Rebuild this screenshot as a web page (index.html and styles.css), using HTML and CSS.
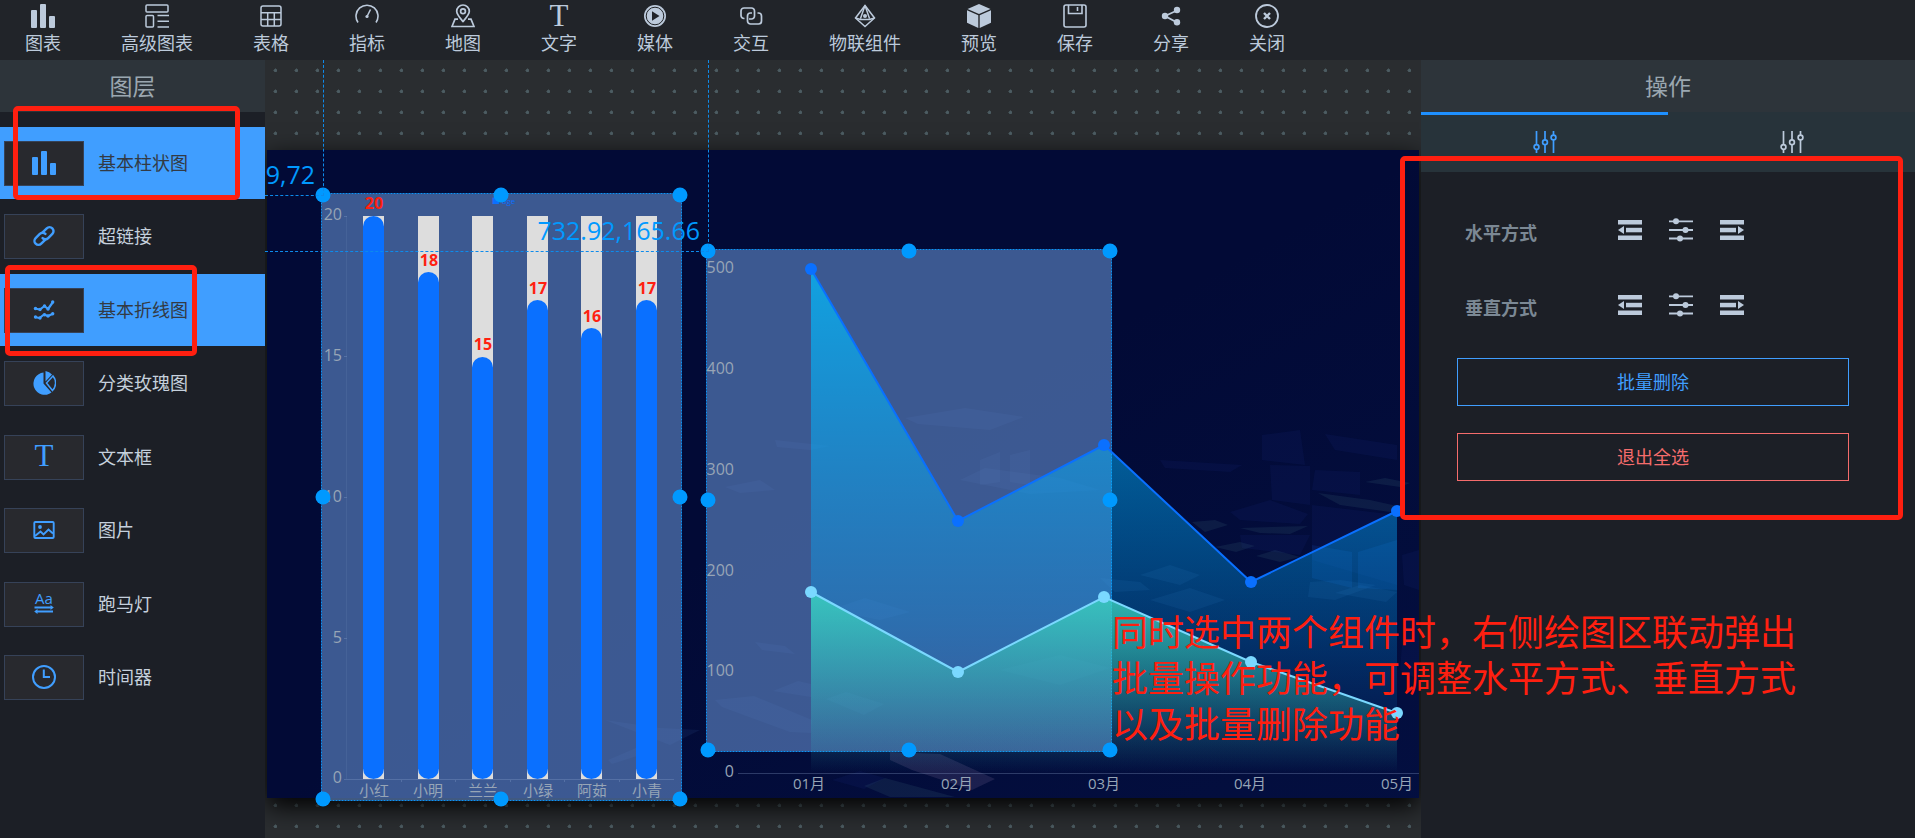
FILE: index.html
```html
<!DOCTYPE html>
<html lang="zh-CN">
<head>
<meta charset="utf-8">
<title>图层</title>
<link rel="stylesheet" href="styles.css">
</head>
<body>
<svg class="defs" aria-hidden="true">
  <symbol id="i-bars" viewBox="0 0 24 24"><g fill="currentColor"><rect y="6" width="6" height="18" rx="1"/><rect x="9" width="6" height="24" rx="1"/><rect x="18" y="12" width="6" height="12" rx="1"/></g></symbol>
  <symbol id="i-adv" viewBox="0 0 24 24"><g fill="none" stroke="currentColor" stroke-width="1.5"><rect x="1" y="1" width="22" height="7" rx="1"/><rect x="1" y="11.5" width="7.5" height="11.5" rx="1"/><path d="M12.5 11.5H24M12.5 17.2H24M12.5 23H24"/></g></symbol>
  <symbol id="i-table" viewBox="0 0 24 24"><g fill="none" stroke="currentColor" stroke-width="1.5"><rect x="2" y="2" width="20" height="20" rx="2"/><path d="M2 8.8H22M2 15.4H22M8.7 8.8V22M15.3 8.8V22"/></g></symbol>
  <symbol id="i-gauge" viewBox="0 0 24 24"><g fill="none" stroke="currentColor" stroke-width="1.6"><path d="M3 18.5A11 11 0 1 1 21 18.5"/><path d="M12 12.5L15.5 5.5"/></g><circle cx="12" cy="12.5" r="1.6" fill="currentColor"/></symbol>
  <symbol id="i-map" viewBox="0 0 24 24"><g fill="none" stroke="currentColor" stroke-width="1.7"><path d="M12 17.5C8.5 13.500 5.700 10.500 5.700 7.300A6.300 6.300 0 0 1 18.300 7.300C18.300 10.500 15.500 13.500 12 17.500Z"/><circle cx="12" cy="7.300" r="2.400"/><path d="M7 15.200H4L1 22.500H23L20 15.200H17"/></g></symbol>
  <symbol id="i-play" viewBox="0 0 24 24"><circle cx="12" cy="12" r="11" fill="currentColor"/><circle cx="12" cy="12" r="8.800" fill="none" stroke="#212429" stroke-width="1"/><path d="M9 7.300L16.500 12L9 16.700Z" fill="#212429"/></symbol>
  <symbol id="i-inter" viewBox="0 0 24 24"><g fill="none" stroke="currentColor" stroke-width="1.700"><path d="M5.500 14.500H5A3 3 0 0 1 2 11.500V7A3 3 0 0 1 5 4H12.500A3 3 0 0 1 15.500 7V12A3 3 0 0 1 12.500 15H10"/><path d="M18.500 9H19.500A3 3 0 0 1 22.500 12V17A3 3 0 0 1 19.500 20H11.500A3 3 0 0 1 8.500 17V12A3 3 0 0 1 11.500 9H13"/></g></symbol>
  <symbol id="i-iot" viewBox="0 0 24 24"><g fill="none" stroke="currentColor" stroke-width="1.500"><path d="M12 1.500L21.500 14L12 22.500L2.500 14Z"/><path d="M12 1.500L7.500 14.500M12 1.500L16.500 14.500M2.500 14L7.500 15.500H16.500L21.500 14"/></g><circle cx="12" cy="12" r="2" fill="currentColor"/></symbol>
  <symbol id="i-cube" viewBox="0 0 24 24"><g fill="currentColor"><path d="M12 0L23.500 5L12 10L.500 5Z"/><path d="M0 6.300L11.300 11.300V24L0 18.800Z"/><path d="M24 6.300L12.700 11.300V24L24 18.800Z"/></g></symbol>
  <symbol id="i-save" viewBox="0 0 24 24"><g fill="none" stroke="currentColor" stroke-width="1.600"><rect x="1" y="1" width="22" height="22" rx="2"/><path d="M5.500 1V9.500H19V1M14.500 3V7"/></g></symbol>
  <symbol id="i-share" viewBox="0 0 24 24"><path d="M18 6.500L6 12L18 18.500" fill="none" stroke="currentColor" stroke-width="1.800"/><g fill="currentColor"><circle cx="18" cy="6" r="3.200"/><circle cx="6" cy="12" r="3.200"/><circle cx="18" cy="18.200" r="3.200"/></g></symbol>
  <symbol id="i-close" viewBox="0 0 24 24"><circle cx="12" cy="12" r="11" fill="none" stroke="currentColor" stroke-width="1.800"/><path d="M9 9L15 15M15 9L9 15" stroke="currentColor" stroke-width="2.400"/></symbol>
  <symbol id="i-chain" viewBox="2 2 20 20"><g fill="none" stroke="currentColor" stroke-width="2.200" stroke-linecap="round"><path d="M10.500 9L14.500 5A3.600 3.600 0 0 1 19.600 10.100L15.800 13.900A3.600 3.600 0 0 1 10.700 13.900"/><path d="M13.500 15L9.500 19A3.600 3.600 0 0 1 4.400 13.900L8.200 10.100A3.600 3.600 0 0 1 13.300 10.100"/></g></symbol>
  <symbol id="i-line" viewBox="0 0 24 24"><g fill="none" stroke="currentColor" stroke-width="2.200" stroke-linejoin="round"><path d="M2.500 10.500L8 11.500L12.500 8L16 11L21 4"/><path d="M2.500 19L7.500 20L12 16.500L16 18L21.500 15.500"/></g><g fill="currentColor"><circle cx="3.500" cy="10.500" r="1.700"/><circle cx="8" cy="11.500" r="1.700"/><circle cx="12.500" cy="8" r="1.700"/><circle cx="16" cy="11" r="1.700"/><circle cx="20.700" cy="4" r="1.700"/><circle cx="3.500" cy="19" r="1.700"/><circle cx="8" cy="20" r="1.700"/><circle cx="12.500" cy="16.700" r="1.700"/><circle cx="16" cy="18" r="1.700"/><circle cx="20.700" cy="15.700" r="1.700"/></g></symbol>
  <symbol id="i-pie" viewBox="0 0 24 24"><path d="M11.500 1.500V12.500L19.500 21.500A11.200 11.200 0 1 1 11.500 1.500Z" fill="currentColor"/><path d="M13.500 0V10.500L20 3.500A10.500 10.500 0 0 0 13.500 0Z" fill="currentColor"/><path d="M21 5L14.500 12L20.500 19.500A10.800 10.800 0 0 0 21 5Z" fill="none" stroke="currentColor" stroke-width="1.500"/></symbol>
  <symbol id="i-image" viewBox="0 0 24 24"><g fill="none" stroke="currentColor" stroke-width="1.900"><rect x="2.300" y="4" width="19.400" height="16" rx="1"/><path d="M3 18L8.500 13.500L11.500 16.500L16.500 11.500L21 15.500"/></g><circle cx="8" cy="9" r="1.900" fill="currentColor"/></symbol>
  <symbol id="i-clock" viewBox="0 0 24 24"><g fill="none" stroke="currentColor" stroke-width="2"><circle cx="12" cy="12" r="11"/><path d="M11.800 4.500V12H18"/></g></symbol>
  <symbol id="i-sliders" viewBox="0 0 24 24"><g fill="none" stroke="currentColor" stroke-width="1.700"><path d="M3.500 1V15M3.500 19.500V23M12 1V10M12 14.500V23M20.500 1V5.500M20.500 10V23"/><circle cx="3.500" cy="17" r="2.400"/><circle cx="12" cy="12.200" r="2.400"/><circle cx="20.500" cy="7.500" r="2.400"/></g></symbol>
  <symbol id="i-left" viewBox="0 0 24 24"><g fill="currentColor"><rect y="2" width="24" height="4.500"/><rect x="8" y="9.800" width="16" height="4.500"/><rect y="17.500" width="24" height="4.500"/><path d="M0 12L6 8V16Z"/></g></symbol>
  <symbol id="i-right" viewBox="0 0 24 24"><g fill="currentColor"><rect y="2" width="24" height="4.500"/><rect y="9.800" width="16" height="4.500"/><rect y="17.500" width="24" height="4.500"/><path d="M24 12L18 8V16Z"/></g></symbol>
  <symbol id="i-mid" viewBox="0 0 24 24"><path d="M0 3.300H24M0 12H24M0 20.500H24" stroke="currentColor" stroke-width="1.800"/><g fill="currentColor"><circle cx="7" cy="3.300" r="3"/><circle cx="16.500" cy="12" r="3"/><circle cx="11" cy="20.500" r="3"/></g></symbol>
</svg>

<div class="app">
  <nav class="toolbar">
    <button class="tool"><svg class="icon"><use href="#i-bars"/></svg><span>图表</span></button>
    <button class="tool"><svg class="icon"><use href="#i-adv"/></svg><span>高级图表</span></button>
    <button class="tool"><svg class="icon"><use href="#i-table"/></svg><span>表格</span></button>
    <button class="tool"><svg class="icon"><use href="#i-gauge"/></svg><span>指标</span></button>
    <button class="tool"><svg class="icon"><use href="#i-map"/></svg><span>地图</span></button>
    <button class="tool"><svg class="icon" viewBox="0 0 24 24"><text x="12" y="22" class="glyph-serif">T</text></svg><span>文字</span></button>
    <button class="tool"><svg class="icon"><use href="#i-play"/></svg><span>媒体</span></button>
    <button class="tool"><svg class="icon"><use href="#i-inter"/></svg><span>交互</span></button>
    <button class="tool"><svg class="icon"><use href="#i-iot"/></svg><span>物联组件</span></button>
    <button class="tool"><svg class="icon"><use href="#i-cube"/></svg><span>预览</span></button>
    <button class="tool"><svg class="icon"><use href="#i-save"/></svg><span>保存</span></button>
    <button class="tool"><svg class="icon"><use href="#i-share"/></svg><span>分享</span></button>
    <button class="tool"><svg class="icon"><use href="#i-close"/></svg><span>关闭</span></button>
  </nav>

  <div class="workspace">
    <aside class="layers">
      <h2 class="panel-title">图层</h2>
      <ul class="layer-list">
        <li class="layer active"><span class="thumb"><svg class="icon"><use href="#i-bars"/></svg></span>基本柱状图</li>
        <li class="layer"><span class="thumb"><svg class="icon small"><use href="#i-chain"/></svg></span>超链接</li>
        <li class="layer active"><span class="thumb"><svg class="icon"><use href="#i-line"/></svg></span>基本折线图</li>
        <li class="layer"><span class="thumb"><svg class="icon"><use href="#i-pie"/></svg></span>分类玫瑰图</li>
        <li class="layer"><span class="thumb"><svg class="icon" viewBox="0 0 24 24"><text x="12" y="21" class="glyph-serif">T</text></svg></span>文本框</li>
        <li class="layer"><span class="thumb"><svg class="icon"><use href="#i-image"/></svg></span>图片</li>
        <li class="layer"><span class="thumb"><svg class="icon" viewBox="0 0 24 24"><text x="12" y="12" class="glyph-sans">Aa</text><path d="M2.500 15.500H19.500M4.500 19.500H21" stroke="currentColor" stroke-width="1.800"/><path d="M18.500 13L21.800 15.500L18.500 18ZM5.500 17L2.200 19.500L5.500 22Z" fill="currentColor"/></svg></span>跑马灯</li>
        <li class="layer"><span class="thumb"><svg class="icon"><use href="#i-clock"/></svg></span>时间器</li>
      </ul>
    </aside>

    <main class="canvas">
      <div class="screen">
        <svg class="city" viewBox="267 150 1152 648" preserveAspectRatio="xMidYMid slice" aria-hidden="true">
          <defs>
            <linearGradient id="glow" x1="0" y1="0" x2="1" y2="1"><stop offset=".5" stop-color="#0a2a78" stop-opacity="0"/><stop offset="1" stop-color="#0a2a78" stop-opacity=".15"/></linearGradient>
          </defs>
          <rect x="267" y="150" width="1152" height="648" fill="url(#glow)"/>
          <g fill="#3f6fb0" fill-opacity=".12">
            <path d="M905 418L965 408L1024 417L990 430L918 424Z"/><path d="M775 440L830 446L810 450L777 447Z"/>
            <path d="M725 487L760 480L775 490L740 493Z"/><path d="M960 480L985 468L1060 478L1100 490L1030 494Z"/>
            <path d="M980 460L1000 452V482L980 485ZM1010 455L1030 450V485L1010 482Z"/>
            <path d="M715 700L754 696L812 720L811 733L790 732L722 707Z"/>
            <path d="M773 691L798 681L811 684V697Z"/><path d="M826 699L846 692L884 704L864 715Z"/>
            <path d="M755 642L785 646L795 654L762 650Z"/><path d="M830 610L865 598L910 612L880 620Z"/>
            <path d="M605 720L660 728L700 730L670 745Z"/><path d="M608 760L650 742L640 755L612 764Z"/>
            <path d="M1000 670L1060 655L1110 668L1060 685Z"/><path d="M1340 580L1376 585L1335 600L1308 597L1310 582Z"/>
            <path d="M1335 593L1360 585L1397 592L1386 602Z"/><path d="M1140 575L1170 565L1200 575L1180 585Z"/>
            <path d="M1150 600L1190 588L1225 600L1190 612Z"/><path d="M1100 578L1140 582L1150 590L1115 592Z"/>
          </g>
          <g fill="#4d7f8f" fill-opacity=".14">
            <path d="M1192 522L1215 520L1228 525L1205 532Z"/><path d="M1240 528L1308 526L1290 534L1260 533Z"/>
            <path d="M1215 547L1240 542L1255 546L1236 552Z"/><path d="M1256 556L1275 550L1300 557L1280 562Z"/>
            <path d="M1318 493L1370 500L1397 506L1390 512L1340 505Z"/><path d="M1365 482L1385 478L1410 483L1400 487Z"/>
            <path d="M864 786L885 778L955 797H890Z"/>
          </g>
          <g fill="#2b3c9c" fill-opacity=".1">
            <path d="M1262 435L1300 430L1305 465L1262 460Z"/><path d="M1270 465L1310 466V505L1272 500Z"/>
            <path d="M1315 470L1360 472V495L1312 490Z"/><path d="M1312 505L1397 515V585L1312 560Z"/>
            <path d="M1240 535L1310 535L1300 555L1242 548Z"/><path d="M1325 434L1397 445V460L1335 450Z"/>
            <path d="M1160 460L1242 465L1230 472L1165 468Z"/><path d="M1230 512L1270 500L1308 514L1300 524L1240 520Z"/>
            <path d="M832 780L860 771L885 778L864 789Z"/>
            <path d="M1402 555L1419 550V590L1404 585ZM1404 620H1419V680L1400 670Z"/>
          </g>
          <path d="M890 752L940 754L995 779L972 790L912 770L890 760Z" fill="#80709a" fill-opacity=".2"/>
          <path d="M1312 545L1352 552V588L1312 578ZM1358 552L1397 540V590L1358 588Z" fill="#1658c8" fill-opacity=".16"/>
        </svg>
      </div>

      <div class="widget widget-bar">
        <svg viewBox="321 193 361 608" role="img" aria-label="基本柱状图">
          <rect class="sel" x="321.500" y="193.500" width="360" height="607"/>
          <text class="legend" x="492" y="204">■ age</text>
          <g class="axis"><path d="M344 779.500H674M344 216.500H347M344 356.500H347M344 497.500H347M344 638.500H347M401.500 780V782M455.500 780V782M510.500 780V782M564.500 780V782M619.500 780V782"/><path d="M346.500 216V779" stroke-opacity=".12"/></g>
          <g class="tick end"><text x="342" y="220">20</text><text x="342" y="361">15</text><text x="342" y="502">10</text><text x="342" y="643">5</text><text x="342" y="783">0</text></g>
          <g fill="#dddddd"><rect x="363" y="216" width="21" height="563"/><rect x="418" y="216" width="21" height="563"/><rect x="472" y="216" width="21" height="563"/><rect x="527" y="216" width="21" height="563"/><rect x="581" y="216" width="21" height="563"/><rect x="636" y="216" width="21" height="563"/></g>
          <g fill="#0a70ff"><rect x="363" y="216" width="21" height="563" rx="10.500"/><rect x="418" y="272" width="21" height="507" rx="10.500"/><rect x="472" y="357" width="21" height="422" rx="10.500"/><rect x="527" y="300" width="21" height="479" rx="10.500"/><rect x="581" y="328" width="21" height="451" rx="10.500"/><rect x="636" y="300" width="21" height="479" rx="10.500"/></g>
          <g class="value"><text x="374" y="209">20</text><text x="429" y="266">18</text><text x="483" y="350">15</text><text x="538" y="294">17</text><text x="592" y="322">16</text><text x="647" y="294">17</text></g>
          <g class="tick mid"><text x="374" y="796">小红</text><text x="428" y="796">小明</text><text x="483" y="796">兰兰</text><text x="538" y="796">小绿</text><text x="592" y="796">阿茹</text><text x="647" y="796">小青</text></g>
          <g class="handle"><circle cx="323" cy="195" r="7.500"/><circle cx="501" cy="195" r="7.500"/><circle cx="680" cy="195" r="7.500"/><circle cx="323" cy="497" r="7.500"/><circle cx="680" cy="497" r="7.500"/><circle cx="323" cy="799" r="7.500"/><circle cx="501" cy="799" r="7.500"/><circle cx="680" cy="799" r="7.500"/></g>
        </svg>
      </div>

      <div class="widget widget-line">
        <svg viewBox="706 249 713 549" role="img" aria-label="基本折线图">
          <defs>
            <linearGradient id="blue" gradientUnits="userSpaceOnUse" x1="0" y1="269" x2="0" y2="773"><stop offset="0" stop-color="#00beff" stop-opacity=".72"/><stop offset=".7" stop-color="#00aaff" stop-opacity=".27"/><stop offset="1" stop-color="#0096ff" stop-opacity="0"/></linearGradient>
            <linearGradient id="green" gradientUnits="userSpaceOnUse" x1="0" y1="592" x2="0" y2="773"><stop offset="0" stop-color="#3cd8c0" stop-opacity=".8"/><stop offset="1" stop-color="#3cc8b0" stop-opacity="0"/></linearGradient>
          </defs>
          <rect class="sel" x="706.500" y="249.500" width="405" height="502"/>
          <path class="axis" d="M738 773.500H1419"/>
          <g class="tick end"><text x="734" y="273">500</text><text x="734" y="374">400</text><text x="734" y="475">300</text><text x="734" y="576">200</text><text x="734" y="676">100</text><text x="734" y="777">0</text></g>
          <g class="tick mid"><text x="809" y="789">01月</text><text x="957" y="789">02月</text><text x="1104" y="789">03月</text><text x="1250" y="789">04月</text><text x="1397" y="789">05月</text></g>
          <path d="M811 269L958 521L1104 445L1251 582L1397 511V773H811Z" fill="url(#blue)"/>
          <path d="M811 592L958 672L1104 597L1251 662L1397 713V773H811Z" fill="url(#green)"/>
          <path d="M811 269L958 521L1104 445L1251 582L1397 511" class="series blue"/>
          <path d="M811 592L958 672L1104 597L1251 662L1397 713" class="series cyan"/>
          <g fill="#0a70ff"><circle cx="811" cy="269" r="6"/><circle cx="958" cy="521" r="6"/><circle cx="1104" cy="445" r="6"/><circle cx="1251" cy="582" r="6"/><circle cx="1397" cy="511" r="6"/></g>
          <g fill="#7ad8ff"><circle cx="811" cy="592" r="6"/><circle cx="958" cy="672" r="6"/><circle cx="1104" cy="597" r="6"/><circle cx="1251" cy="662" r="6"/><circle cx="1397" cy="713" r="6"/></g>
          <g class="handle"><circle cx="708" cy="251" r="7.500"/><circle cx="909" cy="251" r="7.500"/><circle cx="1110" cy="251" r="7.500"/><circle cx="708" cy="500" r="7.500"/><circle cx="1110" cy="500" r="7.500"/><circle cx="708" cy="750" r="7.500"/><circle cx="909" cy="750" r="7.500"/><circle cx="1110" cy="750" r="7.500"/></g>
        </svg>
      </div>

      <div class="guide guide-bar"><span class="coords">9,72</span></div>
      <div class="guide guide-line"><span class="coords">732.92,165.66</span></div>
    </main>

    <aside class="operations">
      <h2 class="panel-title">操作</h2>
      <div class="tabs">
        <button class="tab current" aria-label="对齐"><svg class="icon"><use href="#i-sliders"/></svg></button>
        <button class="tab" aria-label="设置"><svg class="icon"><use href="#i-sliders"/></svg></button>
      </div>
      <div class="form">
        <div class="row"><span class="row-label">水平方式</span>
          <button class="align" aria-label="左"><svg class="icon"><use href="#i-left"/></svg></button>
          <button class="align" aria-label="中"><svg class="icon"><use href="#i-mid"/></svg></button>
          <button class="align" aria-label="右"><svg class="icon"><use href="#i-right"/></svg></button>
        </div>
        <div class="row"><span class="row-label">垂直方式</span>
          <button class="align" aria-label="上"><svg class="icon"><use href="#i-left"/></svg></button>
          <button class="align" aria-label="中"><svg class="icon"><use href="#i-mid"/></svg></button>
          <button class="align" aria-label="下"><svg class="icon"><use href="#i-right"/></svg></button>
        </div>
        <button class="action primary">批量删除</button>
        <button class="action danger">退出全选</button>
      </div>
    </aside>
  </div>

  <div class="mark mark-bar"></div>
  <div class="mark mark-line"></div>
  <div class="mark mark-ops"></div>
  <p class="note">同时选中两个组件时，右侧绘图区联动弹出<br>批量操作功能，可调整水平方式、垂直方式<br>以及批量删除功能</p>
</div>
</body>
</html>
```

FILE: styles.css
```css
* { box-sizing: border-box; }

body {
  margin: 0;
  background: #1c1f26;
  color: #bccadb;
  font-family: "Open Sans", "Noto Sans CJK SC", sans-serif;
  font-size: 18px;
  line-height: 24px;
}

button {
  padding: 0;
  border: 0;
  background: none;
  color: inherit;
  font: inherit;
  cursor: pointer;
}

.defs { position: absolute; width: 0; height: 0; }
.icon { display: block; width: 24px; height: 24px; overflow: visible; }
.icon.small { width: 22px; height: 22px; }
.glyph-serif {
  fill: currentColor;
  font-family: "Liberation Serif", serif;
  font-size: 31px;
  text-anchor: middle;
}
.glyph-sans { fill: currentColor; font-size: 15px; text-anchor: middle; }

.app {
  position: relative;
  display: flex;
  flex-direction: column;
  min-height: 100vh;
  overflow: hidden;
}

/* Toolbar */
.toolbar {
  display: flex;
  gap: 60px;
  height: 60px;
  padding: 4px 25px;
  background: #212429;
}
.tool {
  display: flex;
  flex-direction: column;
  align-items: center;
  gap: 3px;
  white-space: nowrap;
}

.workspace { display: flex; flex: 1; }

.panel-title {
  margin: 0;
  background: #2d343a;
  color: #9ba7b0;
  font-size: 23px;
  font-weight: 400;
  line-height: 52px;
  text-align: center;
}

/* Layer list */
.layers { flex: 0 0 265px; background: #1c1f26; }
.layer-list { margin: 0; padding: 15px 0 0; list-style: none; }
.layer {
  display: flex;
  align-items: center;
  gap: 14px;
  height: 72px;
  margin-bottom: 1px;
  padding-left: 4px;
  color: #c5d0dc;
}
.layer:nth-child(even) { margin-bottom: 2px; }
.layer.active { background: #409eff; color: #333a44; }
.thumb {
  display: grid;
  place-items: center;
  width: 80px;
  height: 45px;
  border: 1px solid #364258;
  background: #28292e;
  color: #409eff;
}

/* Drawing canvas */
.canvas {
  position: relative;
  flex: 1;
  min-width: 0;
  overflow: hidden;
  background: #2a2d30 radial-gradient(circle, #4c5c62 0 1px, #4c5c6288 2px, transparent 2px) 0 0 / 21px 21px;
}
.screen {
  height: 648px;
  margin: 90px 2px 0;
  background: #020a36;
  box-shadow: 0 8px 24px #000000;
}
.city { display: block; width: 100%; height: 100%; }

.widget { position: absolute; }
.widget svg { display: block; width: 100%; height: 100%; overflow: visible; }
.widget-bar { left: 56px; top: 133px; width: 361px; height: 608px; }
.widget-line { left: 441px; top: 189px; width: 713px; height: 549px; }

.sel { fill: rgba(100, 142, 207, 0.6); stroke: #0d93f5; stroke-width: 1; stroke-dasharray: 2 1; }
.handle { fill: #0099ff; }
.axis { fill: none; stroke: #8fa4d0; stroke-opacity: 0.3; }
.tick { fill: #97a5b6; font-size: 15px; }
.end { font-size: 16px; text-anchor: end; }
.mid { text-anchor: middle; }
.value { fill: #ff2010; font-size: 16px; font-weight: 700; text-anchor: middle; }
.legend { fill: #0a70ff; font-size: 8px; }
.series { fill: none; stroke-width: 2; }
.series.blue { stroke: #0a70ff; }
.series.cyan { stroke: #7ad8ff; }

.guide {
  position: absolute;
  left: 0;
  top: 0;
  display: flex;
  align-items: flex-end;
  justify-content: flex-end;
  border: dashed #0d8bec;
  border-width: 0 1px 1px 0;
}
.guide-bar { width: 59px; height: 136px; padding: 0 8px 4px 0; }
.guide-line { width: 444px; height: 192px; padding: 0 8px 4px 0; }
.coords { color: #0099ff; font-size: 25px; line-height: 34px; }

/* Operations panel */
.operations { flex: 0 0 494px; background: #1c1f26; }
.tabs { display: flex; background: #27333a; }
.tab {
  display: grid;
  flex: 1;
  place-items: center;
  height: 60px;
  border-top: 3px solid transparent;
  padding-bottom: 3px;
}
.tab.current { border-top-color: #1e90ff; color: #409eff; }
.form {
  display: flex;
  flex-direction: column;
  padding: 20px 66px 0 36px;
}
.row {
  display: flex;
  align-items: center;
  gap: 27px;
  height: 75px;
  padding-left: 8px;
}
.row-label { flex: 0 0 126px; padding-top: 6px; color: #7b8894; font-weight: 700; }
.action {
  height: 48px;
  margin-top: 16px;
  border: 1px solid;
}
.action + .action { margin-top: 27px; }
.primary { color: #409eff; }
.danger { color: #f56c6c; }

/* Annotations drawn over the editor */
.mark {
  position: absolute;
  border: 5px solid #ff1f10;
  border-radius: 5px;
}
.mark-bar { left: 13px; top: 106px; width: 227px; height: 94px; }
.mark-line { left: 5px; top: 265px; width: 192px; height: 91px; }
.mark-ops { right: 12px; top: 156px; width: 503px; height: 364px; }
.note {
  position: absolute;
  left: 1112px;
  top: 610px;
  margin: 0;
  color: #ff1f10;
  font-size: 36px;
  line-height: 46px;
  white-space: nowrap;
}
```
